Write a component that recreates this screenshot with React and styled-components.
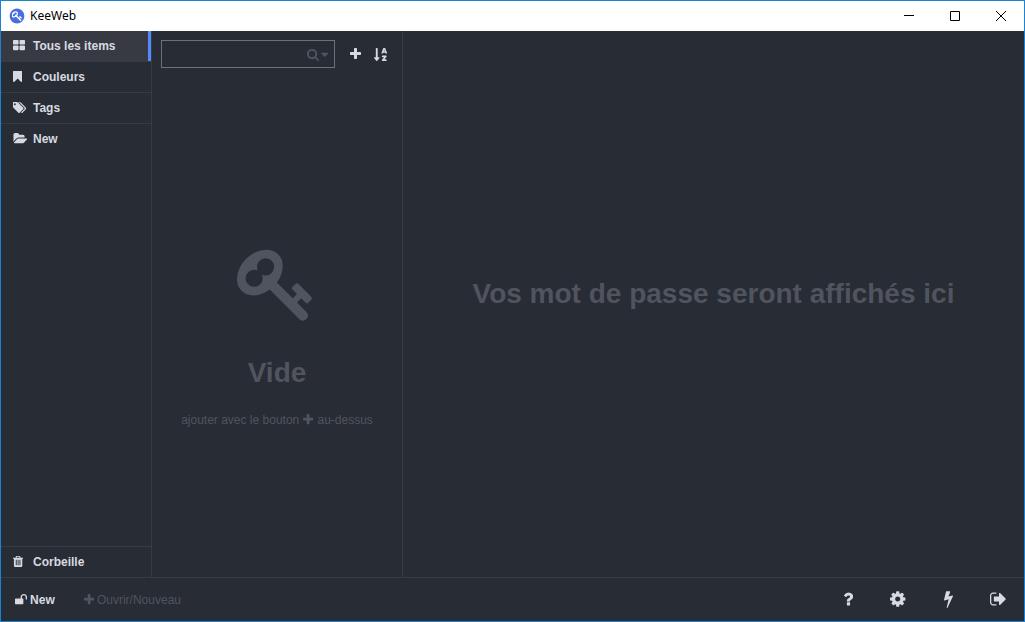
import React from "react";
import styled, { createGlobalStyle, css } from "styled-components";
import { FaSortAlphaDown } from "react-icons/fa";

const color = {
  bg: "#282c34",
  line: "#373b44",
  active: "#373a42",
  text: "#d7dae0",
  muted: "#50545e",
  field: "#6c7079",
  blue: "#528bff",
  frame: "#1883d7",
};

const GlobalStyle = createGlobalStyle`
  *, *::before, *::after { box-sizing: border-box; }
  body {
    margin: 0;
    background: ${color.bg};
    color: ${color.text};
    font: 12px/18px "Liberation Sans", Arial, Helvetica, sans-serif;
  }
  button { font: inherit; color: inherit; background: none; border: 0; padding: 0; cursor: pointer; }
`;

/* Each glyph: left edge, width and outline on a 1792-unit em square. */
const glyphs = {
  thLarge: [64, 1664, "M832 1024v384q0 52-38 90t-90 38h-512q-52 0-90-38t-38-90v-384q0-52 38-90t90-38h512q52 0 90 38t38 90zm0-768v384q0 52-38 90t-90 38h-512q-52 0-90-38t-38-90v-384q0-52 38-90t90-38h512q52 0 90 38t38 90zm896 768v384q0 52-38 90t-90 38h-512q-52 0-90-38t-38-90v-384q0-52 38-90t90-38h512q52 0 90 38t38 90zm0-768v384q0 52-38 90t-90 38h-512q-52 0-90-38t-38-90v-384q0-52 38-90t90-38h512q52 0 90 38t38 90z"],
  bookmark: [256, 1280, "M1420 128q23 0 44 9 33 13 52.5 41t19.5 62v1289q0 34-19.5 62t-52.5 41q-19 8-44 8-48 0-83-32l-441-424-441 424q-36 33-83 33-23 0-44-9-33-13-52.5-41t-19.5-62v-1289q0-34 19.5-62t52.5-41q21-9 44-9h1048z"],
  tags: [0, 1856, "M384 448q0-53-37.5-90.5t-90.5-37.5-90.5 37.5-37.5 90.5 37.5 90.5 90.5 37.5 90.5-37.5 37.5-90.5zm1067 576q0 53-37 90l-491 492q-39 37-91 37-53 0-90-37l-715-716q-38-37-64.5-101t-26.5-117v-416q0-52 38-90t90-38h416q53 0 117 26.5t102 64.5l715 714q37 39 37 91zm384 0q0 53-37 90l-491 492q-39 37-91 37-36 0-59-14t-53-45l470-470q37-37 37-90 0-52-37-91l-715-714q-38-38-102-64.5t-117-26.5h224q53 0 117 26.5t102 64.5l715 714q37 39 37 91z"],
  folderOpen: [0, 1944, "M1943 952q0 31-31 66l-336 396q-43 51-120.5 86.5t-143.5 35.5h-1088q-34 0-60.5-13t-26.5-43q0-31 31-66l336-396q43-51 120.5-86.5t143.5-35.5h1088q34 0 60.5 13t26.5 43zm-343-344v160h-832q-94 0-197 47.5t-164 119.5l-337 396-5 6q0-4-.5-12.5t-.5-12.5v-960q0-92 66-158t158-66h320q92 0 158 66t66 158v32h544q92 0 158 66t66 158z"],
  trash: [192, 1408, "M704 1376v-704q0-14-9-23t-23-9h-64q-14 0-23 9t-9 23v704q0 14 9 23t23 9h64q14 0 23-9t9-23zm256 0v-704q0-14-9-23t-23-9h-64q-14 0-23 9t-9 23v704q0 14 9 23t23 9h64q14 0 23-9t9-23zm256 0v-704q0-14-9-23t-23-9h-64q-14 0-23 9t-9 23v704q0 14 9 23t23 9h64q14 0 23-9t9-23zm-544-992h448l-48-117q-7-9-17-11h-317q-10 2-17 11zm928 32v64q0 14-9 23t-23 9h-96v948q0 83-47 143.5t-113 60.5h-832q-66 0-113-58.5t-47-141.5v-952h-96q-14 0-23-9t-9-23v-64q0-14 9-23t23-9h309l70-167q15-37 54-63t79-26h320q40 0 79 26t54 63l70 167h309q14 0 23 9t9 23z"],
  unlock: [64, 1664, "M1728 576v256q0 26-19 45t-45 19h-64q-26 0-45-19t-19-45v-256q0-106-75-181t-181-75-181 75-75 181v192h96q40 0 68 28t28 68v576q0 40-28 68t-68 28h-960q-40 0-68-28t-28-68v-576q0-40 28-68t68-28h672v-192q0-185 131.5-316.5t316.5-131.5 316.5 131.5 131.5 316.5z"],
  plus: [192, 1408, "M1600 736v192q0 40-28 68t-68 28h-416v416q0 40-28 68t-68 28h-192q-40 0-68-28t-28-68v-416h-416q-40 0-68-28t-28-68v-192q0-40 28-68t68-28h416v-416q0-40 28-68t68-28h192q40 0 68 28t28 68v416h416q40 0 68 28t28 68z"],
  search: [64, 1664, "M1216 832q0-185-131.5-316.5t-316.5-131.5-316.5 131.5-131.5 316.5 131.5 316.5 316.5 131.5 316.5-131.5 131.5-316.5zm512 832q0 52-38 90t-90 38q-54 0-90-38l-343-342q-179 124-399 124-143 0-273.5-55.5t-225-150-150-225-55.5-273.5 55.5-273.5 150-225 225-150 273.5-55.5 273.5 55.5 225 150 150 225 55.5 273.5q0 220-124 399l343 343q37 37 37 90z"],
  caret: [384, 1024, "M1408 704q0 26-19 45l-448 448q-19 19-45 19t-45-19l-448-448q-19-19-19-45t19-45 45-19h896q26 0 45 19t19 45z"],
  question: [384, 1024, "M1088 1256v240q0 16-12 28t-28 12h-240q-16 0-28-12t-12-28v-240q0-16 12-28t28-12h240q16 0 28 12t12 28zm316-600q0 54-15.5 101t-35 76.5-55 59.5-57.5 43.5-61 35.5q-41 23-68.5 65t-27.5 67q0 17-12 32.5t-28 15.5h-240q-15 0-25.5-18.5t-10.5-37.5v-45q0-83 65-156.5t143-108.5q59-27 84-56t25-76q0-42-46.5-74t-107.5-32q-65 0-108 29-35 25-107 115-13 16-31 16-12 0-25-8l-164-125q-13-10-15.5-25t5.5-28q160-266 464-266 80 0 161 31t146 83 106 127.5 41 158.5z"],
  cog: [128, 1536, "M1152 896q0-106-75-181t-181-75-181 75-75 181 75 181 181 75 181-75 75-181zm512-109v222q0 12-8 23t-20 13l-185 28q-19 54-39 91 35 50 107 138 10 12 10 25t-9 23q-27 37-99 108t-94 71q-12 0-26-9l-138-108q-44 23-91 38-16 136-29 186-7 28-36 28h-222q-14 0-24.5-8.5t-11.5-21.5l-28-184q-49-16-90-37l-141 107q-10 9-25 9-14 0-25-11-126-114-165-168-7-10-7-23 0-12 8-23 15-21 51-66.5t54-70.5q-27-50-41-99l-183-27q-13-2-21-12.5t-8-23.5v-222q0-12 8-23t19-13l186-28q14-46 39-92-40-57-107-138-10-12-10-24 0-10 9-23 26-36 98.5-107.5t94.5-71.5q13 0 26 10l138 107q44-23 91-38 16-136 29-186 7-28 36-28h222q14 0 24.5 8.5t11.5 21.5l28 184q49 16 90 37l142-107q9-9 24-9 13 0 25 10 129 119 165 170 7 8 7 22 0 12-8 23-15 21-51 66.5t-54 70.5q26 50 41 98l183 28q13 2 21 12.5t8 23.5z"],
  bolt: [448, 896, "M1333 566q18 20 7 44l-540 1157q-13 25-42 25-4 0-14-2-17-5-25.5-19t-4.5-30l197-808-406 101q-4 1-12 1-18 0-31-11-18-15-13-39l201-825q4-14 16-23t28-9h328q19 0 32 12.5t13 29.5q0 8-5 18l-171 463 396-98q8-2 12-2 19 0 34 15z"],
  signOut: [64, 1568, "M704 1440q0 4 1 20t.5 26.5-3 23.5-10 19.5-20.5 6.5h-320q-119 0-203.5-84.5t-84.5-203.5v-704q0-119 84.5-203.5t203.5-84.5h320q13 0 22.5 9.5t9.5 22.5q0 4 1 20t.5 26.5-3 23.5-10 19.5-20.5 6.5h-320q-66 0-113 47t-47 113v704q0 66 47 113t113 47h312l11.5 1 11.5 3 8 5.5 7 9 2 13.5zm928-544q0 26-19 45l-544 544q-19 19-45 19t-45-19-19-45v-288h-448q-26 0-45-19t-19-45v-384q0-26 19-45t45-19h448v-288q0-26 19-45t45-19 45 19l544 544q19 19 19 45z"],
  key: [0, 1792, "M832 512q0-80-56-136t-136-56-136 56-56 136q0 42 19 83-41-19-83-19-80 0-136 56t-56 136 56 136 136 56 136-56 56-136q0-42-19-83 41 19 83 19 80 0 136-56t56-136zm851 704q0 17-49 66t-66 49q-9 0-28.5-16t-36.5-33-38.5-40-24.5-26l-96 96 220 220q28 28 28 68 0 42-39 81t-81 39q-40 0-68-28l-671-671q-176 131-365 131-163 0-265.5-102.5t-102.5-265.5q0-160 95-313t248-248 313-95q163 0 265.5 102.5t102.5 265.5q0 189-131 365l355 355 96-96q-3-3-26-24.5t-40-38.5-33-36.5-16-28.5q0-17 49-66t66-49q13 0 23 10 6 6 46 44.5t82 79.5 86.5 86 73 78 28.5 41z"],
};

const Svg = styled.svg`
  display: block;
  flex: none;
  height: ${(p) => p.$size}px;
  fill: currentColor;
`;

function Icon({ name, size = 13 }) {
  const [x, width, d] = glyphs[name];
  return (
    <Svg $size={size} viewBox={`${x} 0 ${width} 1792`} aria-hidden="true">
      <path d={d} />
    </Svg>
  );
}

const Window = styled.div`
  display: flex;
  flex-direction: column;
  min-height: 100vh;
  border: 1px solid ${color.frame};
`;

const TitleBar = styled.header`
  display: flex;
  align-items: center;
  height: 30px;
  padding-left: 8px;
  background: #fff;
  color: #000;
  font-family: "Noto Sans", "Open Sans", sans-serif;
`;

const Logo = styled.svg`
  width: 16px;
  height: 16px;
`;

const Title = styled.span`
  flex: 1;
  padding-left: 5px;
`;

const WindowButton = styled.button`
  display: grid;
  place-items: center;
  width: 46px;
  height: 30px;

  svg {
    width: 12px;
    height: 12px;
    fill: none;
    stroke: #000;
  }
`;

const Body = styled.div`
  flex: 1;
  display: flex;
`;

const Sidebar = styled.nav`
  display: flex;
  flex-direction: column;
  justify-content: space-between;
  width: 151px;
  border-right: 1px solid ${color.line};
`;

const MenuButton = styled.button`
  display: grid;
  grid-template-columns: 21px 1fr;
  align-items: center;
  width: 100%;
  height: 30px;
  padding-left: 11px;
  text-align: left;
  font-weight: bold;

  svg {
    margin: 0 0 1px 1px;
  }

  ${(p) =>
    p.$active &&
    css`
      background: ${color.active};
      border-right: 3px solid ${color.blue};
    `}
`;

const MenuSection = styled.div`
  & + & {
    border-top: 1px solid ${color.line};
  }
`;

const TrashSection = styled.div`
  border-top: 1px solid ${color.line};
`;

const ListPane = styled.section`
  display: flex;
  flex-direction: column;
  width: 251px;
  border-right: 1px solid ${color.line};
`;

const Toolbar = styled.div`
  display: flex;
  align-items: center;
  padding: 9px;
`;

const SearchBox = styled.div`
  flex: 1;
  min-width: 0;
  display: flex;
  align-items: center;
  height: 28px;
  padding-right: 6px;
  margin-right: 8px;
  border: 1px solid ${color.field};
  color: ${color.muted};
`;

const SearchInput = styled.input`
  flex: 1;
  min-width: 0;
  height: 26px;
  padding: 0 8px;
  border: 0;
  outline: 0;
  background: none;
  color: ${color.text};
  font: inherit;
`;

const SearchOptions = styled.button`
  display: flex;
  align-items: center;
  gap: 2px;
`;

const ToolButton = styled.button`
  flex: none;
  display: grid;
  place-items: center;
  width: 25px;
  height: 28px;
`;

const Empty = styled.div`
  flex: 1;
  display: flex;
  flex-direction: column;
  align-items: center;
  justify-content: center;
  padding-top: 18px;
  color: ${color.muted};
`;

const Heading = styled.h1`
  margin: 0;
  font-size: 28px;
  line-height: 34px;
`;

const EmptyTitle = styled(Heading)`
  margin: 32px 0 21px;
`;

const Hint = styled.p`
  display: flex;
  align-items: center;
  gap: 4px;
  margin: 0;
`;

const Details = styled.main`
  flex: 1;
  display: flex;
  align-items: center;
  justify-content: center;
  padding-bottom: 20px;
  color: ${color.muted};
`;

const Footer = styled.footer`
  display: flex;
  align-items: center;
  height: 44px;
  padding: 0 1px 0 14px;
  border-top: 1px solid ${color.line};
`;

const FileButton = styled.button`
  display: flex;
  align-items: center;
  gap: 3px;
  margin-right: 29px;
  font-weight: ${(p) => (p.$muted ? "normal" : "bold")};
  color: ${(p) => (p.$muted ? color.muted : color.text)};
`;

const FooterActions = styled.div`
  display: flex;
  margin-left: auto;
`;

const FooterButton = styled.button`
  display: grid;
  place-items: center;
  width: 50px;
  height: 43px;
  padding-bottom: 2px;
`;

const menu = [
  { icon: "thLarge", label: "Tous les items", active: true },
  { icon: "bookmark", label: "Couleurs" },
  { icon: "tags", label: "Tags" },
  { icon: "folderOpen", label: "New" },
];

const actions = [
  { icon: "question", label: "Aide" },
  { icon: "cog", label: "Paramètres" },
  { icon: "bolt", label: "Générateur" },
  { icon: "signOut", label: "Verrouiller" },
];

export default function App() {
  return (
    <>
      <GlobalStyle />
      <Window>
        <TitleBar>
          <Logo viewBox="0 0 16 16" aria-hidden="true">
            <circle cx="8" cy="8" r="7.4" fill="#4a6ee0" />
            <svg x="3" y="3" width="10" height="10" viewBox="64 100 1620 1600">
              <path d={glyphs.key[2]} fill="#fff" />
            </svg>
          </Logo>
          <Title>KeeWeb</Title>
          <WindowButton aria-label="Réduire">
            <svg viewBox="0 0 12 12"><path d="M1 5.5h10" /></svg>
          </WindowButton>
          <WindowButton aria-label="Agrandir">
            <svg viewBox="0 0 12 12"><path d="M1.5 1.5h9v9h-9z" /></svg>
          </WindowButton>
          <WindowButton aria-label="Fermer">
            <svg viewBox="0 0 12 12"><path d="M1 1l10 10M11 1L1 11" /></svg>
          </WindowButton>
        </TitleBar>
        <Body>
          <Sidebar>
            <div>
              {menu.map((item) => (
                <MenuSection key={item.label}>
                  <MenuButton $active={item.active}>
                    <Icon name={item.icon} />
                    {item.label}
                  </MenuButton>
                </MenuSection>
              ))}
            </div>
            <TrashSection>
              <MenuButton>
                <Icon name="trash" />
                Corbeille
              </MenuButton>
            </TrashSection>
          </Sidebar>
          <ListPane>
            <Toolbar>
              <SearchBox>
                <SearchInput type="text" aria-label="Rechercher" />
                <SearchOptions aria-label="Options de recherche">
                  <Icon name="search" />
                  <Icon name="caret" />
                </SearchOptions>
              </SearchBox>
              <ToolButton aria-label="Ajouter">
                <Icon name="plus" size={14} />
              </ToolButton>
              <ToolButton aria-label="Trier">
                <FaSortAlphaDown size={15} />
              </ToolButton>
            </Toolbar>
            <Empty>
              <Icon name="key" size={80} />
              <EmptyTitle>Vide</EmptyTitle>
              <Hint>
                ajouter avec le bouton <Icon name="plus" /> au-dessus
              </Hint>
            </Empty>
          </ListPane>
          <Details>
            <Heading>Vos mot de passe seront affichés ici</Heading>
          </Details>
        </Body>
        <Footer>
          <FileButton>
            <Icon name="unlock" />
            New
          </FileButton>
          <FileButton $muted>
            <Icon name="plus" />
            Ouvrir/Nouveau
          </FileButton>
          <FooterActions>
            {actions.map((action) => (
              <FooterButton key={action.icon} aria-label={action.label}>
                <Icon name={action.icon} size={18} />
              </FooterButton>
            ))}
          </FooterActions>
        </Footer>
      </Window>
    </>
  );
}
